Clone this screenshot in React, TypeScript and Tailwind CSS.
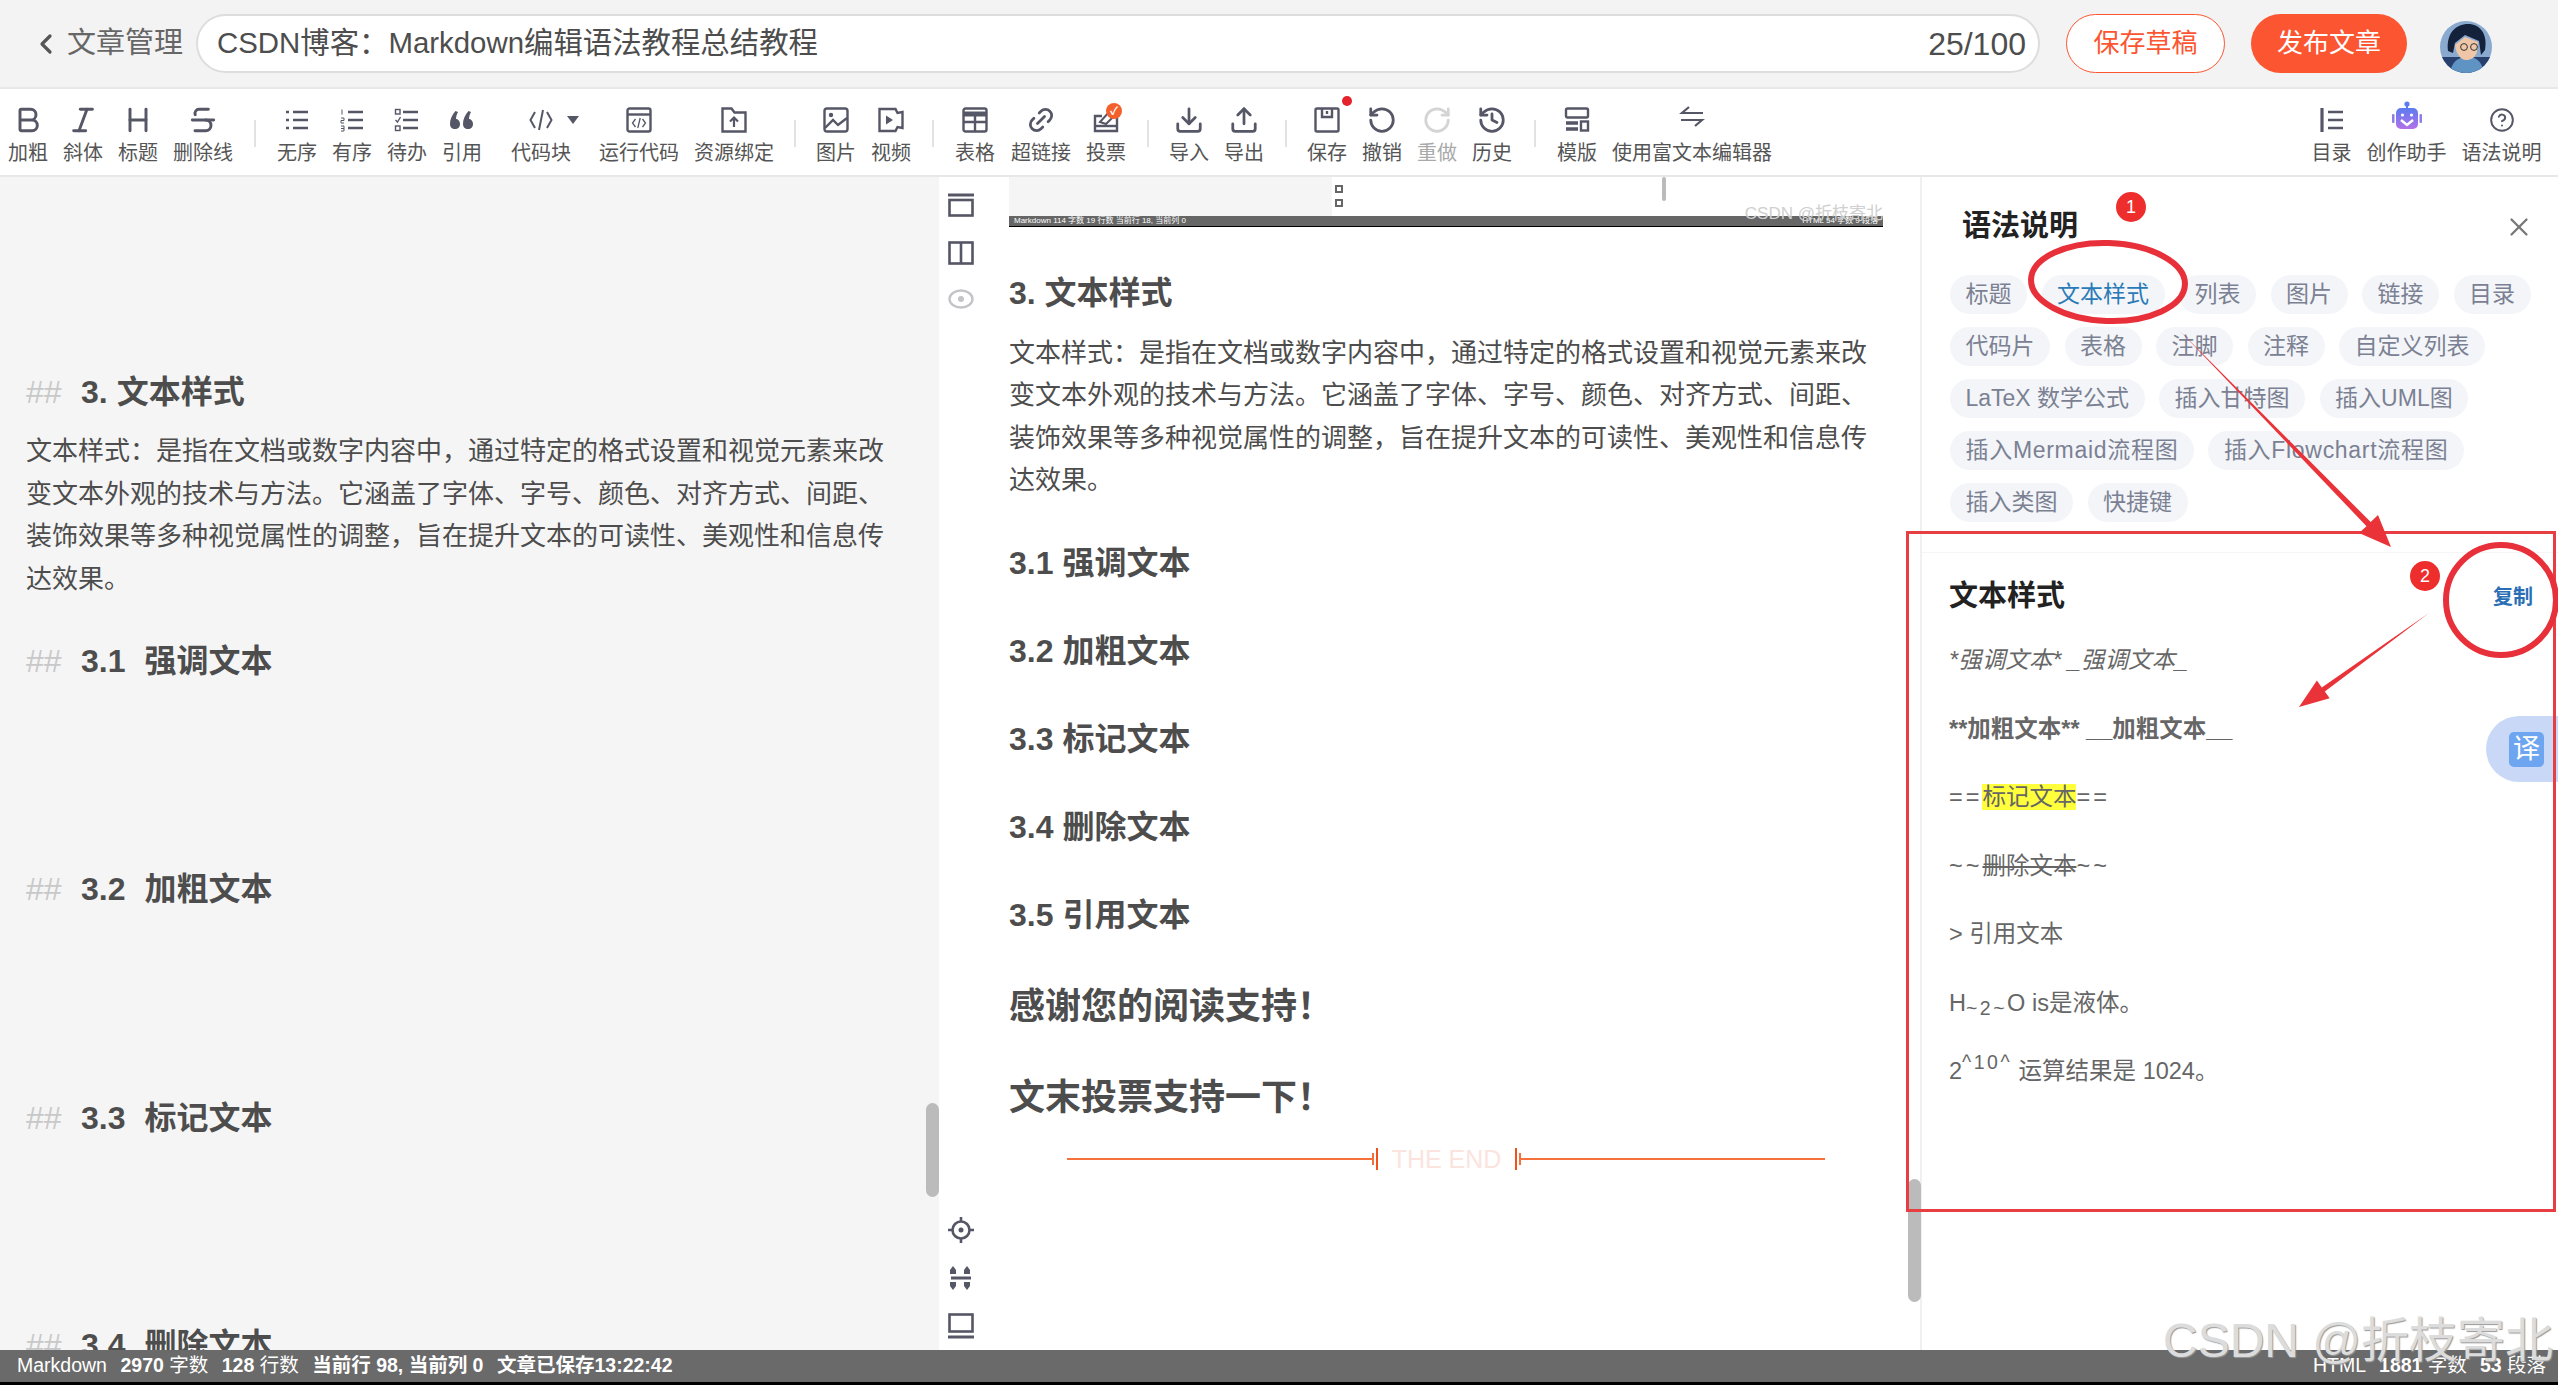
import type { ReactNode } from "react";
import { Bold, Italic, Heading, Strikethrough, Link2, Download, Upload, RotateCcw, RotateCw, History, CircleHelp, X, ChevronLeft } from "lucide-react";

const ICON = "#555666";

function Svg({ children }: { children: ReactNode }) {
  return (
    <svg width="26" height="26" viewBox="0 0 26 26" fill="none" stroke={ICON} strokeWidth="2.4">
      {children}
    </svg>
  );
}

function Bars({ marks }: { marks: ReactNode }) {
  return (
    <Svg>
      {marks}
      <path d="M9 5h15M9 13h15M9 21h15" strokeWidth="2.6" />
    </Svg>
  );
}

const dots = <path d="M2 5h3M2 13h3M2 21h3" strokeWidth="2.6" />;
const nums = <path d="M3 2.5v5M2 11h3v2.5H2V16h3M2 19h3v5H2M2 21.5h3" strokeWidth="1" />;
const todo = (
  <g strokeWidth="1.4">
    <rect x="1.5" y="2.5" width="4.5" height="4.5" />
    <path d="M1.5 13l2 2 3-5" />
    <rect x="1.5" y="19" width="4.5" height="4.5" />
  </g>
);

const quote = (
  <svg width="26" height="26" viewBox="0 0 26 26" fill={ICON}>
    <path d="M6.5 4C3 8 1 12 1 17c0 3 2 5 5 5s5-2 5-5-2-5-4-5c0-3 1-5 2-7z" />
    <path d="M19.5 4C16 8 14 12 14 17c0 3 2 5 5 5s5-2 5-5-2-5-4-5c0-3 1-5 2-7z" />
  </svg>
);

const code = (
  <Svg>
    <path d="M7 5L2.5 13 7 21M19 5l4.5 8-4.5 8M15 3l-4 20" strokeWidth="2" />
  </Svg>
);

const runCode = (
  <Svg>
    <rect x="1.5" y="1.5" width="23" height="23" rx="2" />
    <path d="M1.5 7.5h23" />
    <path d="M9.5 12l-3 4 3 4M16.5 12l3 4-3 4M14.2 11l-2.4 10" strokeWidth="1.3" />
  </Svg>
);

const bindRes = (
  <Svg>
    <path d="M1.5 1.5h9l3 4h11v19h-23z" />
    <path d="M13 20v-9M9 14.5l4-4 4 4" strokeWidth="2.2" />
  </Svg>
);

const image = (
  <Svg>
    <rect x="1.5" y="1.5" width="23" height="23" rx="2.5" />
    <circle cx="8" cy="8" r="2.2" fill={ICON} stroke="none" />
    <path d="M2 21l8-8 5 5 9-7" />
  </Svg>
);

const video = (
  <Svg>
    <path d="M1.5 2h16l2 4 5-1v16l-5-1-2 4h-16z" />
    <path d="M8 8.5l7 4.5-7 4.5z" fill={ICON} stroke="none" />
  </Svg>
);

const table = (
  <Svg>
    <rect x="1.5" y="1.5" width="23" height="23" rx="2" />
    <path d="M1.5 7h23" strokeWidth="5" />
    <path d="M1.5 15h23M13 8v16" />
  </Svg>
);

const vote = (
  <div className="relative h-[26px] w-[26px]">
    <Svg>
      <path d="M9 9H2v15h22V9h-3" />
      <path d="M2 19h22" />
      <path d="M7 15l9-10 5 4-8 8z" strokeWidth="2" />
    </Svg>
    <div className="absolute -right-[3px] -top-[4px] flex h-[16px] w-[16px] items-center justify-center rounded-full bg-[#f4602b] text-[11px] font-bold leading-none text-white">✓</div>
  </div>
);

const save = (
  <div className="relative h-[26px] w-[26px]">
    <Svg>
      <rect x="1.5" y="1.5" width="23" height="23" rx="1.5" />
      <path d="M8 2v8h10V2" />
      <path d="M13 4v3" />
    </Svg>
    <div className="absolute -right-[12px] -top-[11px] h-[10px] w-[10px] rounded-full bg-[#e5232d]" />
  </div>
);

const template = (
  <Svg>
    <rect x="2" y="1.5" width="22" height="9" rx="1.5" />
    <path d="M2 16h12M2 22h12" strokeWidth="3.4" />
    <rect x="17" y="14.5" width="7" height="9" />
  </Svg>
);

const swap = (
  <div className="-mt-[6px] h-[26px]">
    <Svg>
      <path d="M24 9H3l7-6M2 16h21l-7 6" strokeWidth="2.2" />
    </Svg>
  </div>
);

const toc = (
  <Svg>
    <path d="M3 1v24" strokeWidth="3.2" />
    <path d="M9 5h15M9 13h15M9 21h15" strokeWidth="2.6" />
  </Svg>
);

const robot = (
  <div className="-mt-[8px]">
    <svg width="34" height="30" viewBox="0 0 34 30">
      <defs>
        <linearGradient id="bot" x1="0" y1="0" x2="0" y2="1">
          <stop offset="0" stopColor="#5a7cf0" />
          <stop offset="1" stopColor="#b470e8" />
        </linearGradient>
      </defs>
      <circle cx="17" cy="3" r="2.6" fill="#5a7cf0" />
      <rect x="16" y="3" width="2" height="4" fill="#5a7cf0" />
      <rect x="6" y="7" width="22" height="21" rx="5" fill="url(#bot)" />
      <rect x="2" y="13" width="2.5" height="9" rx="1" fill="#8d7ee8" />
      <rect x="29.5" y="13" width="2.5" height="9" rx="1" fill="#8d7ee8" />
      <circle cx="12.5" cy="14" r="1.6" fill="#fff" />
      <circle cx="21.5" cy="14" r="1.6" fill="#fff" />
      <path d="M11 19l6 5 6-5" fill="none" stroke="#fff" strokeWidth="2.4" />
    </svg>
  </div>
);

function Tool({ label, icon, className = "" }: { label: string; icon: ReactNode; className?: string }) {
  return (
    <div className={`flex shrink-0 flex-col items-center px-[7.5px] ${className}`}>
      <div className="flex h-[26px] items-center justify-center">{icon}</div>
      <div className="mt-[5px] whitespace-nowrap text-[20px] leading-[30px] text-[#555]">{label}</div>
    </div>
  );
}

function Sep({ className }: { className: string }) {
  return <div className={`mt-[13px] h-[27px] w-[2px] shrink-0 bg-[#e2e2e2] ${className}`} />;
}

const CHIPS = ["标题", "文本样式", "列表", "图片", "链接", "目录", "代码片", "表格", "注脚", "注释", "自定义列表", "LaTeX 数学公式", "插入甘特图", "插入UML图", "插入Mermaid流程图", "插入Flowchart流程图", "插入类图", "快捷键"];

const SUBHEADS = ["3.1 强调文本", "3.2 加粗文本", "3.3 标记文本", "3.4 删除文本", "3.5 引用文本"];

const PARA = "文本样式：是指在文档或数字内容中，通过特定的格式设置和视觉元素来改变文本外观的技术与方法。它涵盖了字体、字号、颜色、对齐方式、间距、装饰效果等多种视觉属性的调整，旨在提升文本的可读性、美观性和信息传达效果。";

function Avatar() {
  return (
    <svg width="52" height="52" viewBox="0 0 52 52" className="rounded-full">
      <rect width="52" height="52" fill="#8aa9cf" />
      <rect y="36" width="52" height="16" fill="#28406e" />
      <path d="M10 52c2-12 8-16 18-16s14 6 16 16z" fill="#5f93c4" />
      <path d="M8 30C6 12 16 3 28 3s20 10 17 26l-4 5-2-14-14-6-10 8-2 10z" fill="#14213a" />
      <path d="M15 24l10-8 13 5-1 10c-2 6-6 8-11 8s-10-6-11-15z" fill="#efc7a8" />
      <circle cx="24" cy="26" r="3.4" fill="none" stroke="#333" strokeWidth="1" />
      <circle cx="34" cy="26" r="3.4" fill="none" stroke="#333" strokeWidth="1" />
    </svg>
  );
}

function LeftHeading({ num, text, className }: { num: string; text: string; className: string }) {
  return (
    <div className={`flex h-[44px] items-center text-[32px] font-bold text-[#4d4d4d] ${className}`}>
      <span className="w-[55px] font-normal text-[#c8c8c8]">##</span>
      <span>{num}</span>
      <span className={num === "3." ? "ml-[9px]" : "ml-[19px]"}>{text}</span>
    </div>
  );
}

export default function App() {
  return (
    <div className="relative flex h-[1385px] w-[2558px] flex-col overflow-hidden bg-white [font-family:Liberation_Sans,Noto_Sans_CJK_SC,sans-serif]">
      {/* header */}
      <div className="flex h-[89px] shrink-0 items-center border-b-2 border-[#e8e8e8] bg-[#f3f3f3]">
        <ChevronLeft className="ml-[30px] h-[32px] w-[32px] text-[#555]" strokeWidth={2.4} />
        <span className="ml-[5px] w-[129px] text-[29px] text-[#666]">文章管理</span>
        <div className="flex h-[59px] w-[1844px] items-center justify-between rounded-full border-2 border-[#ddd] bg-white pl-[19px] pr-[12px] text-[29.4px] text-[#4d4d4d]">
          <span>CSDN博客：Markdown编辑语法教程总结教程</span>
          <span className="text-[32px]">25/100</span>
        </div>
        <button className="ml-[26px] h-[59px] w-[159px] rounded-full border border-[#fc5531] bg-white text-[26px] text-[#fc5531]">保存草稿</button>
        <button className="ml-[26px] h-[59px] w-[156px] rounded-full bg-[#fc5531] text-[26px] text-white">发布文章</button>
        <div className="ml-[33px] mt-[6px]"><Avatar /></div>
      </div>

      {/* toolbar */}
      <div className="flex h-[88px] shrink-0 items-start border-b-2 border-[#e8e8e8] pl-[0.5px] pr-[9px] pt-[18px]">
        <Tool label="加粗" icon={<Bold size={32} color={ICON} strokeWidth={2.2} />} />
        <Tool label="斜体" icon={<Italic size={32} color={ICON} strokeWidth={2.2} />} />
        <Tool label="标题" icon={<Heading size={32} color={ICON} strokeWidth={2.2} />} />
        <Tool label="删除线" icon={<Strikethrough size={32} color={ICON} strokeWidth={2.2} />} />
        <Sep className="mx-[13.5px]" />
        <Tool label="无序" icon={<Bars marks={dots} />} />
        <Tool label="有序" icon={<Bars marks={nums} />} />
        <Tool label="待办" icon={<Bars marks={todo} />} />
        <Tool label="引用" icon={quote} />
        <Tool
          label="代码块"
          className="ml-[14px]"
          icon={
            <div className="relative">
              {code}
              <div className="absolute -right-[25px] top-[9px] h-0 w-0 border-x-[6px] border-t-[8px] border-x-transparent border-t-[#555666]" />
            </div>
          }
        />
        <Tool label="运行代码" className="ml-[13px]" icon={runCode} />
        <Tool label="资源绑定" icon={bindRes} />
        <Sep className="mx-[12.5px]" />
        <Tool label="图片" icon={image} />
        <Tool label="视频" icon={video} />
        <Sep className="mx-[13.5px]" />
        <Tool label="表格" icon={table} />
        <Tool label="超链接" className="ml-[1px]" icon={<Link2 size={30} color={ICON} strokeWidth={2.2} className="-rotate-45" />} />
        <Tool label="投票" icon={vote} />
        <Sep className="mx-[13px]" />
        <Tool label="导入" icon={<Download size={30} color={ICON} strokeWidth={2.2} />} />
        <Tool label="导出" icon={<Upload size={30} color={ICON} strokeWidth={2.2} />} />
        <Sep className="mx-[13px]" />
        <Tool label="保存" icon={save} />
        <Tool label="撤销" icon={<RotateCcw size={30} color={ICON} strokeWidth={2.2} />} />
        <div className="opacity-50">
          <Tool label="重做" icon={<RotateCw size={30} color="#aaa" strokeWidth={2.2} />} />
        </div>
        <Tool label="历史" icon={<History size={30} color={ICON} strokeWidth={2.2} />} />
        <Sep className="mx-[14px]" />
        <Tool label="模版" icon={template} />
        <Tool label="使用富文本编辑器" icon={swap} />
        <div className="ml-auto flex">
          <Tool label="目录" icon={toc} />
          <Tool label="创作助手" icon={robot} />
          <Tool label="语法说明" icon={<CircleHelp size={26} color={ICON} strokeWidth={1.8} />} />
        </div>
      </div>

      {/* main */}
      <div className="flex min-h-0 flex-1">
        {/* markdown source */}
        <div className="relative w-[939px] shrink-0 overflow-hidden bg-[#f5f5f5] pl-[26px] pr-[26px] pt-[193px]">
          <LeftHeading num="3." text="文本样式" className="" />
          <p className="mt-[16px] w-[874px] text-[26px] leading-[42.6px] text-[#4d4d4d]">{PARA}</p>
          <LeftHeading num="3.1" text="强调文本" className="mt-[39px]" />
          <LeftHeading num="3.2" text="加粗文本" className="mt-[184px]" />
          <LeftHeading num="3.3" text="标记文本" className="mt-[185px]" />
          <LeftHeading num="3.4" text="删除文本" className="mt-[183px]" />
          <div className="absolute left-[926px] top-[926px] h-[94px] w-[13px] rounded-full bg-[#bbb]" />
        </div>

        {/* preview */}
        <div className="relative flex w-[983px] shrink-0 border-r-2 border-[#f0f0f0]">
          <div className="flex w-[44px] shrink-0 flex-col items-center justify-between pb-[11px] pt-[16px]">
            <div className="flex flex-col gap-[24px]">
              <svg width="26" height="24" viewBox="0 0 26 24" fill="none" stroke={ICON} strokeWidth="2.6">
                <path d="M0 2h26" strokeWidth="3" />
                <rect x="1.5" y="7" width="23" height="15.5" />
              </svg>
              <svg width="26" height="24" viewBox="0 0 26 24" fill="none" stroke={ICON} strokeWidth="2.6">
                <rect x="1.5" y="1.5" width="23" height="21" />
                <path d="M13 1v22" />
              </svg>
              <svg width="26" height="20" viewBox="0 0 26 20" fill="none" stroke="#c4c4c8" strokeWidth="2.4">
                <ellipse cx="13" cy="10" rx="11.5" ry="8.5" />
                <circle cx="13" cy="10" r="3" fill="#c4c4c8" stroke="none" />
              </svg>
            </div>
            <div className="flex flex-col gap-[22px]">
              <svg width="26" height="26" viewBox="0 0 26 26" fill="none" stroke={ICON} strokeWidth="2.6">
                <circle cx="13" cy="13" r="8.5" />
                <circle cx="13" cy="13" r="2.5" fill={ICON} stroke="none" />
                <path d="M13 0v5M13 21v5M0 13h5M21 13h5" />
              </svg>
              <svg width="26" height="26" viewBox="0 0 26 26" fill={ICON}>
                <path d="M5 1l3 4v4H2V5zM19 1l3 4v4h-6V5zM5 25l3-4v-4H2v4zM19 25l3-4v-4h-6v4zM3 11.5h20v3H3z" />
              </svg>
              <svg width="26" height="26" viewBox="0 0 26 26" fill="none" stroke={ICON} strokeWidth="2.6">
                <rect x="1.5" y="1.5" width="23" height="17" />
                <path d="M0 24h26" strokeWidth="3" />
              </svg>
            </div>
          </div>

          <div className="ml-[26px] w-[874px] shrink-0 text-[#4d4d4d]">
            {/* bottom edge of the pasted screenshot */}
            <div className="flex h-[50px] flex-col">
              <div className="relative flex h-[39px]">
                <div className="w-[323px] bg-[#f5f5f5]" />
                <div className="ml-[3px] mt-[8px] flex h-[26px] flex-col gap-[6px]">
                  <div className="h-[8px] w-[8px] border-2 border-[#666]" />
                  <div className="h-[8px] w-[8px] border-2 border-[#666]" />
                </div>
                <div className="absolute left-[653px] top-0 h-[24px] w-[4px] rounded-full bg-[#bbb]" />
                <div className="absolute right-0 top-[28px] z-10 whitespace-nowrap text-[17px] leading-[18px] text-[#cfcfcf]">CSDN @折枝寄北</div>
              </div>
              <div className="flex h-[10px] items-center justify-between bg-[#666] px-[5px] text-[8px] leading-[10px] text-white">
                <span>Markdown 114 字数 19 行数 当前行 18, 当前列 0</span>
                <span>HTML 54 字数 9 段落</span>
              </div>
              <div className="h-[1px] bg-black" />
            </div>

            <h2 className="mt-[43.5px] flex h-[44px] items-center text-[32px] font-bold">3. 文本样式</h2>
            <p className="mt-[17px] text-[26px] leading-[42.6px]">{PARA}</p>
            <div className="mt-[39.5px] flex flex-col gap-[44px]">
              {SUBHEADS.map((s) => (
                <h3 key={s} className="flex h-[44px] items-center text-[32px] font-bold">{s}</h3>
              ))}
            </div>
            <h2 className="mt-[44.5px] flex h-[50px] items-center text-[36px] font-bold">感谢您的阅读支持！</h2>
            <h2 className="mt-[41.5px] flex h-[50px] items-center text-[36px] font-bold">文末投票支持一下！</h2>
            <div className="ml-[58px] mt-[25px] flex h-[22px] w-[758px] items-center">
              <div className="h-[2px] w-[305px] bg-[#f5703a]" />
              <div className="h-[12px] w-[2px] bg-[#f5703a]" />
              <div className="ml-[2px] h-[22px] w-[2px] bg-[#f0521c]" />
              <div className="w-[137px] text-center text-[25px] leading-[22px] text-[#fbe4de]">THE END</div>
              <div className="h-[22px] w-[2px] bg-[#f0521c]" />
              <div className="ml-[2px] h-[12px] w-[2px] bg-[#f5703a]" />
              <div className="h-[2px] flex-1 bg-[#f5703a]" />
            </div>
          </div>

          <div className="absolute left-[969px] top-[1002px] h-[123px] w-[13px] rounded-full bg-[#bbb]" />
        </div>

        {/* syntax panel */}
        <div className="min-w-0 flex-1 bg-white">
          <div className="mt-[31px] flex h-[38px] items-center justify-between pl-[40px] pr-[24px]">
            <span className="text-[29px] font-bold text-[#222]">语法说明</span>
            <X size={30} color="#777" strokeWidth={1.8} />
          </div>
          <div className="ml-[28px] mt-[28.5px] flex w-[590px] flex-wrap gap-x-[14.5px] gap-y-[13px]">
            {CHIPS.map((c) => (
              <span
                key={c}
                className={`flex h-[39px] items-center rounded-full bg-[#f3f5f9] px-[15.5px] text-[23px] ${c === "文本样式" ? "text-[#2b7ab8]" : "text-[#7b8192]"} ${c.endsWith("流程图") ? "tracking-[0.7px]" : ""}`}
              >
                {c}
              </span>
            ))}
          </div>
          <div className="mt-[30px] h-[1px] bg-[#f5f5f5]" />
          <div className="pl-[27px] pr-[25px] pt-[25px]">
            <div className="flex h-[38px] items-center justify-between">
              <span className="text-[29px] font-bold text-[#222]">文本样式</span>
              <span className="text-[20px] font-bold text-[#2a6fb5]">复制</span>
            </div>
            <div className="mt-[28.5px] flex flex-col gap-[36.5px] text-[23.5px] leading-[32px] text-[#666]">
              <div className="italic">*强调文本* _强调文本_</div>
              <div className="font-bold">**加粗文本** __加粗文本__</div>
              <div><span className="tracking-[3px]">==</span><mark className="bg-[#ffff3b] text-[#666]">标记文本</mark><span className="tracking-[3px]">==</span></div>
              <div><span className="tracking-[3px]">~~</span><span className="line-through">删除文本</span><span className="tracking-[3px]">~~</span></div>
              <div>&gt; 引用文本</div>
              <div>H<sub className="text-[19.5px] tracking-[2.5px]">~2~</sub>O is是液体。</div>
              <div>2<sup className="text-[19.5px] tracking-[2.5px]">^10^</sup> 运算结果是 1024。</div>
            </div>
          </div>
        </div>
      </div>

      {/* status bar */}
      <div className="flex h-[32px] shrink-0 items-center justify-between bg-[#6a6a6a] pl-[17px] pr-[12px] text-[19.5px] text-white">
        <div className="flex gap-[13.5px]">
          <span>Markdown</span>
          <span><b>2970</b> 字数</span>
          <span><b>128</b> 行数</span>
          <b>当前行 98, 当前列 0</b>
          <b>文章已保存13:22:42</b>
        </div>
        <div className="flex gap-[13px]">
          <span>HTML</span>
          <span><b>1881</b> 字数</span>
          <span><b>53</b> 段落</span>
        </div>
      </div>
      <div className="h-[3px] shrink-0 bg-black" />

      {/* translate float */}
      <div className="absolute left-[2486px] top-[716px] flex h-[66px] w-[72px] items-center rounded-l-full bg-[#c9d8f7] pl-[23px]">
        <div className="flex h-[35px] w-[35px] items-center justify-center rounded-[5px] bg-[#6ea5f0] text-[27px] text-white">译</div>
      </div>

      {/* hand-drawn annotations over the screenshot */}
      <svg className="pointer-events-none absolute left-0 top-0" width="2558" height="1385" fill="none">
        <rect x="1907.5" y="532.5" width="647" height="678" stroke="#e63e42" strokeWidth="3" />
        <ellipse cx="2108" cy="282" rx="77" ry="39" stroke="#e8303a" strokeWidth="6" transform="rotate(2 2108 282)" />
        <circle cx="2501" cy="600" r="55" stroke="#e8303a" strokeWidth="6" />
        <polygon points="2179,330 2370.7,522 2378,515 2391,547 2359,533 2366.5,526.2" fill="#ea3338" />
        <polygon points="2429,613 2324.8,691.4 2329.7,698.3 2299,707 2316.9,680.5 2321.8,687.4" fill="#ea3338" />
      </svg>
      <div className="absolute left-[2116px] top-[192px] flex h-[30px] w-[30px] items-center justify-center rounded-full bg-[#ee2d2d] text-[18px] text-white">1</div>
      <div className="absolute left-[2410px] top-[561px] flex h-[30px] w-[30px] items-center justify-center rounded-full bg-[#ee2d2d] text-[18px] text-white">2</div>

      {/* watermark */}
      <div className="absolute left-[2163px] top-[1315px] whitespace-nowrap text-[48px] leading-[52px] text-[#dcdcdc] [text-shadow:1px_1px_1px_#999]">CSDN @折枝寄北</div>
    </div>
  );
}
